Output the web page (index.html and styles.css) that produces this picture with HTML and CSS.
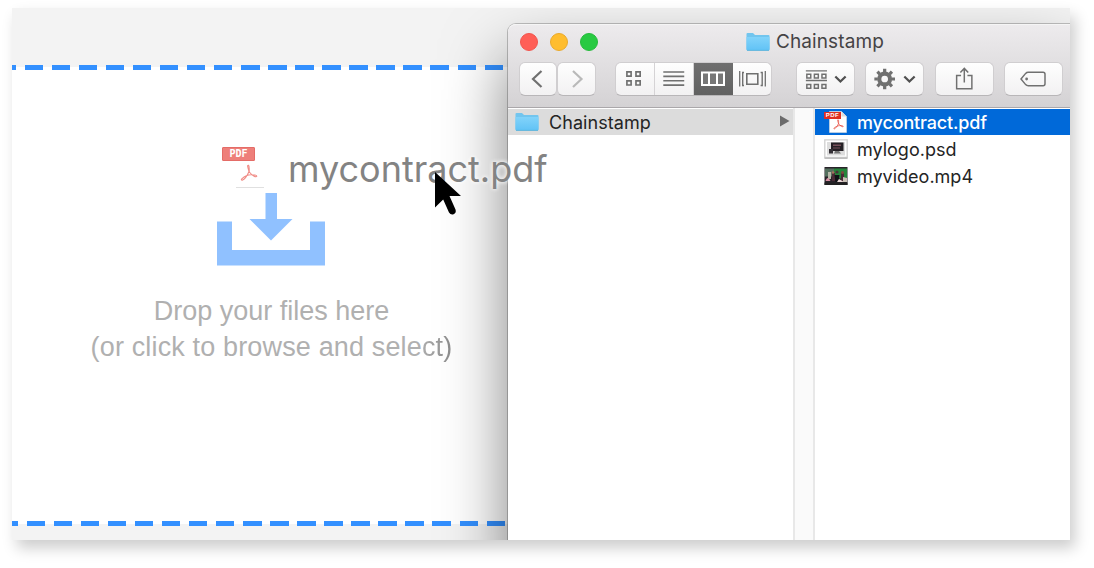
FILE: index.html
```html
<!DOCTYPE html>
<html lang="en">
<head>
<meta charset="utf-8">
<title>Chainstamp</title>
<link rel="stylesheet" href="styles.css">
</head>
<body>
<svg class="defs" aria-hidden="true">
  <defs>
    <linearGradient id="folderFill" x1="0" y1="0" x2="0" y2="1"><stop offset="0" stop-color="#82d3fa"/><stop offset="1" stop-color="#62c3f6"/></linearGradient>
  </defs>
  <symbol id="folder" viewBox="0 0 24 20">
    <path d="M.5 2Q.5 1 1.500 1H7L9 3H22.500Q23.500 3 23.500 4V17.500Q23.500 18.500 22.500 18.500H1.500Q.5 18.500.5 17.500Z" fill="#72c5ee"/>
    <path d="M.5 5H23.500V17.300Q23.500 18 22.500 18H1.500Q.5 18 .5 17.300Z" fill="url(#folderFill)"/>
    <path d="M1 18.400H23" stroke="#4faedb" stroke-width=".8"/>
  </symbol>
  <symbol id="acrobat" viewBox="0 0 18 18">
    <path d="M8.500 1.200Q7.300 1 7.800 3C8.200 5 8.600 6 9 7.500C7.500 11 4.500 15.500 2.200 16.200Q.8 16 1.800 14.800C4 12.800 8 10.800 11 10.800C13.500 10.600 17 11.200 16.800 12.300C16 13.500 12 11.500 9.300 8C9 5 9.600 2 8.500 1.200Z" fill="none" stroke="currentColor" stroke-width="1.100"/>
  </symbol>
</svg>
<main class="stage">
  <section class="dropzone">
    <svg class="tray" viewBox="0 0 108 73"><path d="M48.500 0H60V26H75.500L54 47.500L32.500 26H48.500ZM0 28.500H15V57H93V28.500H108V72.500H0Z" fill="#90c1ff"/></svg>
    <p class="hint">Drop your files here<br><span class="browse">(or click to browse and sele<span class="shade">ct)</span></span></p>
  </section>

  <section class="finder">
    <header class="titlebar">
      <div class="caption">
        <div class="lights"><i class="red"></i><i class="amber"></i><i class="green"></i></div>
        <svg class="folder"><use href="#folder"/></svg><span class="title">Chainstamp</span>
      </div>
      <div class="toolbar">
        <div class="btn nav"><svg viewBox="0 0 36 34"><path d="M21.500 9L13 17L21.500 25" stroke-width="2.200"/></svg></div>
        <div class="btn nav fwd"><svg viewBox="0 0 36 34"><path d="M14.500 9L23 17L14.500 25" stroke="#b9b9b9" stroke-width="2.200"/></svg></div>
        <div class="btn views">
          <div class="seg"><svg viewBox="0 0 39 34"><path d="M11.200 9.700h4.300v4.300h-4.300zM20.500 9.700h4.300v4.300h-4.300zM11.200 18.900h4.300v4.300h-4.300zM20.500 18.900h4.300v4.300h-4.300z" stroke-width="1.700"/></svg></div>
          <div class="seg"><svg viewBox="0 0 39 34"><path d="M8.500 9.800H30M8.500 14.300H30M8.500 18.800H30M8.500 23.300H30" stroke-width="1.600"/></svg></div>
          <div class="seg on"><svg viewBox="0 0 39 34"><path d="M7 9.500H31V24H7Z" fill="#fff" stroke="none"/><path d="M9 11.500h5V22h-5zM16 11.500h6V22h-6zM24 11.500h5V22h-5z" fill="#777" stroke="none"/></svg></div>
          <div class="seg"><svg viewBox="0 0 39 34"><path d="M13.800 11.800h11v10.500h-11z" stroke-width="1.600"/><path d="M6.700 9V24.500M32.300 9V24.500" stroke-width="1.300"/><path d="M11 10.500h-1.300V23.500h1.300M27.600 10.500h1.600V23.500h-1.600" stroke-width="1.400"/></svg></div>
        </div>
        <div class="btn wide arrange"><svg viewBox="0 0 58 34"><path d="M9 8.700H30.500M9 18.500H30.500" stroke-width="1.400"/><path d="M10 12.200h4v3.800h-4zM17.700 12.200h4v3.800h-4zM25.400 12.200h4v3.800h-4zM10 22.500h4v3.800h-4zM17.700 22.500h4v3.800h-4zM25.400 22.500h4v3.800h-4z" stroke-width="1.500"/><path d="M39 14.500L44.200 19.500L49.500 14.500" stroke="#505050" stroke-width="2.300"/></svg></div>
        <div class="btn wide action"><svg viewBox="0 0 58 34"><circle cx="19" cy="17" r="5.500" stroke-width="4.200"/><path d="M19 6.500V10M19 24V27.500M8.500 17H12M26 17H29.500M11.600 9.600L14 12M24 22L26.400 24.400M26.400 9.600L24 12M14 22L11.600 24.400" stroke-width="3.300"/><path d="M39 14.500L44.200 19.500L49.500 14.500" stroke="#505050" stroke-width="2.300"/></svg></div>
        <div class="btn wide share"><svg viewBox="0 0 58 34"><path d="M25.500 13.500H21V27H36.500V13.500H32M28.800 20.500V6.500M24.800 10.300L28.800 6.200L32.800 10.300" stroke-width="1.500"/></svg></div>
        <div class="btn wide tag"><svg viewBox="0 0 58 34"><path d="M16.300 17L21 11.300Q22 10.200 23.700 10.200H38.700Q40.700 10.200 40.700 12.200V21.800Q40.700 23.800 38.700 23.800H23.700Q22 23.800 21 22.700Z" stroke-width="1.500"/><circle cx="22" cy="17" r="1.400" fill="#707070" stroke="none"/></svg></div>
      </div>
    </header>
    <div class="columns">
      <div class="column first">
        <div class="row parent"><svg class="folder"><use href="#folder"/></svg><span>Chainstamp</span><svg class="expand" viewBox="0 0 10 12"><path d="M0 .5L9.500 6L0 11.500Z" fill="#6b6b6b"/></svg></div>
      </div>
      <div class="gutter"></div>
      <div class="column second">
        <div class="row selected">
          <div class="pdf"><svg class="page" viewBox="0 0 18 22"><path d="M.5.5H12.500L17.500 5.500V21.500H.5Z" fill="#fff" stroke="#ddd" stroke-width=".6"/><path d="M12.500.5V5.500H17.500" fill="#ddd"/></svg><svg class="mark"><use href="#acrobat"/></svg><b>PDF</b></div>
          <span>mycontract.pdf</span>
        </div>
        <div class="row"><svg class="thumb" viewBox="0 0 24 20"><path d="M.8.8H23.200V18.500H.8Z" fill="#fff" stroke="#cfcfcf" stroke-width="1.300"/><path d="M.5 19.200H23.500" stroke="#aaa"/><path d="M3 3H21V16.500H3Z" fill="#ddd"/><path d="M7 3.500H19.500V12H7Z" fill="#252025"/><path d="M9 5.500h8v1.500h-8zM9 8.500h7v1h-7z" fill="#77505b"/><path d="M5 10h4v4.500h-4z" fill="#343036"/><path d="M11 12h4l2 2.500h-7z" fill="#777"/></svg><span>mylogo.psd</span></div>
        <div class="row"><svg class="thumb" viewBox="0 0 24 20"><path d="M.5 1H23.500V19H.5Z" fill="#29232a"/><path d="M1 2.500h9v8h-9z" fill="#55705f"/><path d="M10 2.500h13v10h-13z" fill="#26863b"/><path d="M4 6h3v7h-3z" fill="#b8b9a9"/><path d="M8 7h3v8h-3zM17 7h3v8h-3z" fill="#4b2b36"/><path d="M1.500 15q2-6 5 0z" fill="#d890a4"/><path d="M10.500 9h5l-1 7h-3z" fill="#101316"/><path d="M13 16l2-3 5 3z" fill="#e9d7d6"/><path d="M19 11l4 1v4h-4z" fill="#c9c0b5"/><circle cx="13" cy="6" r="1.600" fill="#493338"/><circle cx="18.500" cy="6.500" r="1.500" fill="#7c4a40"/><circle cx="9" cy="6.500" r="1.300" fill="#a5715f"/><path d="M.5 17.700h23" stroke="#222" stroke-width="2.400"/></svg><span>myvideo.mp4</span></div>
      </div>
    </div>
  </section>

  <div class="dragged">
    <div class="ghost-icon"><b>PDF</b><svg><use href="#acrobat"/></svg><i></i></div>
    <span>mycontract.pdf</span>
  </div>
  <svg class="cursor" viewBox="0 0 28 44"><path d="M0 0V35.500L8.200 27.500L14 40.500Q16 43.500 19 42Q21.500 40.500 20.500 37.500L14.500 24H26Z"/></svg>
</main>
</body>
</html>
```
FILE: styles.css
```css
* { box-sizing: border-box; }
body { margin: 0; background: #fff; padding: 8px 24px 28px 12px; }
svg { display: block; }
.defs { position: absolute; width: 0; height: 0; }

.stage {
  position: relative;
  display: flex;
  width: 1058px;
  height: 532px;
  padding: 57px 0 14px;
  overflow: clip;
  background: #f3f3f3;
  box-shadow: 5px 8px 14px rgba(0,0,0,.2);
}

.dropzone {
  width: 519px;
  padding-top: 128px;
  background:
    repeating-linear-gradient(90deg, #3390ff 0 18.500px, transparent 18.500px 27.060px) -14.500px 0 / 600px 5px no-repeat,
    repeating-linear-gradient(90deg, #3390ff 0 18.500px, transparent 18.500px 27.060px) -12.500px 100% / 600px 5px no-repeat,
    linear-gradient(#fff, #fff) 0 2px / 100% calc(100% - 4px) no-repeat;
}
.tray { width: 108px; height: 73px; margin-left: 205px; }
.hint { margin: 27px 0 0; text-align: center; font: 27px/36px "Liberation Sans", Arial, sans-serif; color: #b0b0b0; white-space: nowrap; }
.browse { letter-spacing: .15px; }
.shade { background: linear-gradient(90deg, #acacac, #8c8c8c); -webkit-background-clip: text; background-clip: text; color: transparent; }

.finder {
  position: absolute;
  left: 496px;
  top: 16px;
  width: 562px;
  height: 546px;
  display: flex;
  flex-direction: column;
  color: #242424;
  font: 18px/25px Inter, sans-serif;
  border-radius: 8px 0 0 0;
  background: #fff;
  box-shadow: 0 0 0 1px rgba(0,0,0,.22), 0 34px 64px rgba(0,0,0,.5);
}
.titlebar { height: 84px; border-top: 1px solid #f5f5f5; border-bottom: 1px solid #aaa7aa; border-radius: 8px 0 0 0; background: linear-gradient(#edebed, #d4d2d4); }
.caption { height: 37px; display: flex; align-items: center; padding: 0 0 4px 12px; }
.lights { display: flex; gap: 12px; margin-right: 148px; }
.lights i { width: 18px; height: 18px; border-radius: 50%; border-width: 1px; border-style: solid; }
.red { background: #ff5f57; border-color: #f2554e; }
.amber { background: #ffbd2e; border-color: #eaaa2c; }
.green { background: #28ca42; border-color: #25bb3c; }
.folder { width: 24px; height: 20px; flex: none; }
.title { margin-left: 6px; font-size: 19px; letter-spacing: .1px; color: #454345; }
.toolbar { display: flex; padding-left: 11px; }
.btn { height: 34px; border: 1px solid #d0ced0; border-bottom-color: #b8b6b8; border-radius: 6px; background: linear-gradient(#fefefe, #f2f1f2); }
.btn svg { width: 100%; height: 34px; margin-top: -1px; fill: none; stroke: #707070; }
.nav { width: 38px; }
.fwd { width: 39px; }
.views { display: flex; width: 157px; margin-left: 19px; overflow: hidden; }
.seg { width: 39px; flex: none; border-right: 1px solid #d5d3d5; }
.seg:last-child { border: 0; }
.on { background: linear-gradient(#6f6f6f, #616161); border: 0; }
.wide { width: 59px; }
.arrange { margin-left: 24px; }
.action, .share, .tag { margin-left: 10.300px; }

.columns { display: flex; flex: 1; }
.column { padding-top: 1px; }
.first { width: 285px; }
.gutter { width: 22px; background: #fafafa; border: solid #e8e8e8; border-width: 0 2px; }
.second { flex: 1; }
.row { display: flex; align-items: center; height: 26px; margin-bottom: 1px; padding-left: 9px; white-space: nowrap; }
.row span { margin-left: 9px; }
.parent { padding-left: 7px; background: #dcdcdc; }
.parent span { letter-spacing: .05px; margin-left: 10px; }
.expand { width: 10px; height: 12px; margin: -2px 3px 0 auto; }
.selected { color: #fff; background: #0069d9; font-weight: 500; letter-spacing: -.15px; }
.thumb { width: 24px; height: 20px; }
.pdf { position: relative; width: 24px; height: 22px; padding-left: 5px; }
.page { width: 18px; height: 22px; }
.mark { position: absolute; left: 9px; top: 8px; width: 11px; height: 11px; color: #e43a2c; }
.pdf b { position: absolute; left: 0; top: 1px; width: 17px; height: 7px; background: #df2f22; color: #fff; font: bold 6px/7px "Liberation Sans", sans-serif; text-align: center; letter-spacing: .5px; }

.dragged { position: absolute; left: 210px; top: 137px; display: flex; color: #838383; font: 36px/48px Inter, sans-serif; white-space: nowrap; }
.dragged span { margin-left: 24px; text-shadow: 0 0 4px rgba(255,255,255,.8), 0 0 5px rgba(255,255,255,.8); }
.ghost-icon { width: 42px; padding-top: 2px; }
.ghost-icon b { display: block; width: 33px; height: 14px; border-radius: 1px; background: #ee7f7a; border: 1px solid #e46c67; color: #fff; font: bold 10px/12px "DejaVu Sans Mono", monospace; text-align: center; }
.ghost-icon svg { width: 18px; height: 18px; margin: 3px 0 0 18px; color: #f08c86; }
.ghost-icon i { display: block; height: 1px; width: 28px; margin: 5px 0 0 14px; background: #e0e0e0; }
.cursor { position: absolute; left: 423px; top: 164px; width: 28px; height: 44px; fill: #000; }
```
